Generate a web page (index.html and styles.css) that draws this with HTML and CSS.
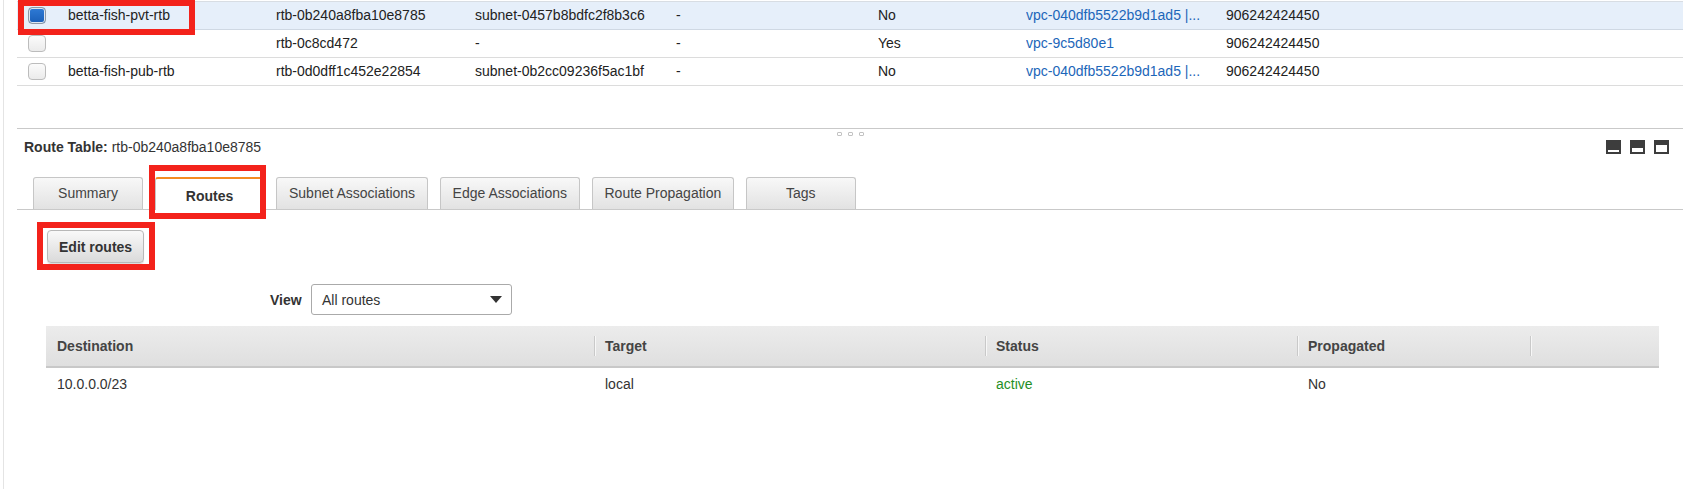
FILE: index.html
```html
<!DOCTYPE html>
<html>
<head>
<meta charset="utf-8">
<link rel="stylesheet" href="styles.css">
</head>
<body>
<div class="page">
  <div class="list">
    <div class="row selected">
      <div class="cell cb"><span class="check on"></span></div>
      <div class="cell">betta-fish-pvt-rtb</div>
      <div class="cell">rtb-0b240a8fba10e8785</div>
      <div class="cell">subnet-0457b8bdfc2f8b3c6</div>
      <div class="cell">-</div>
      <div class="cell">No</div>
      <div class="cell link">vpc-040dfb5522b9d1ad5 |...</div>
      <div class="cell">906242424450</div>
    </div>
    <div class="row">
      <div class="cell cb"><span class="check"></span></div>
      <div class="cell"></div>
      <div class="cell">rtb-0c8cd472</div>
      <div class="cell">-</div>
      <div class="cell">-</div>
      <div class="cell">Yes</div>
      <div class="cell link">vpc-9c5d80e1</div>
      <div class="cell">906242424450</div>
    </div>
    <div class="row">
      <div class="cell cb"><span class="check"></span></div>
      <div class="cell">betta-fish-pub-rtb</div>
      <div class="cell">rtb-0d0dff1c452e22854</div>
      <div class="cell">subnet-0b2cc09236f5ac1bf</div>
      <div class="cell">-</div>
      <div class="cell">No</div>
      <div class="cell link">vpc-040dfb5522b9d1ad5 |...</div>
      <div class="cell">906242424450</div>
    </div>
  </div>

  <div class="splitter"><span class="grip"><i></i><i></i><i></i></span></div>

  <div class="detail-head">
    <div class="title"><b>Route Table:</b> rtb-0b240a8fba10e8785</div>
    <div class="layout-icons">
      <svg width="15" height="14" viewBox="0 0 15 14"><rect width="15" height="14" fill="#3d3d3d"/><rect x="2" y="10" width="11" height="2" fill="#fff"/></svg>
      <svg width="15" height="14" viewBox="0 0 15 14"><rect width="15" height="14" fill="#3d3d3d"/><rect x="2" y="8" width="11" height="4" fill="#fff"/></svg>
      <svg width="15" height="14" viewBox="0 0 15 14"><rect width="15" height="14" fill="#3d3d3d"/><rect x="2" y="5" width="11" height="7" fill="#fff"/></svg>
    </div>
  </div>

  <div class="tabs">
    <div class="tab">Summary</div>
    <div class="tab active">Routes</div>
    <div class="tab">Subnet Associations</div>
    <div class="tab">Edge Associations</div>
    <div class="tab">Route Propagation</div>
    <div class="tab">Tags</div>
  </div>

  <div class="panel">
    <button class="btn">Edit routes</button>
    <div class="view-row">
      <span class="view-label">View</span>
      <div class="select">
        <span>All routes</span>
        <svg width="12" height="7" viewBox="0 0 12 7"><path d="M0 0 L12 0 L6 7 Z" fill="#333"/></svg>
      </div>
    </div>
    <div class="routes">
      <div class="rhead">
        <div class="rc">Destination</div>
        <div class="rc sep">Target</div>
        <div class="rc sep">Status</div>
        <div class="rc sep">Propagated</div>
        <div class="rc sep"></div>
      </div>
      <div class="rrow">
        <div class="rc">10.0.0.0/23</div>
        <div class="rc">local</div>
        <div class="rc ok">active</div>
        <div class="rc">No</div>
        <div class="rc"></div>
      </div>
    </div>
  </div>

  <div class="annot a1"></div>
  <div class="annot a2"></div>
  <div class="annot a3"></div>
</div>
</body>
</html>
```

FILE: styles.css
```css
html, body {
  margin: 0;
  padding: 0;
  background: #fff;
}
body {
  font-family: "Liberation Sans", Arial, Helvetica, sans-serif;
  font-size: 14px;
  color: #222;
}
.page {
  position: relative;
  margin-left: 3px;
  border-left: 1px solid #e4e4e4;
  height: 489px;
  box-sizing: border-box;
  overflow: hidden;
}

/* top list */
.list {
  margin: 1px 10px 0 13px;
  border-top: 1px solid #d8dde3;
}
.row {
  display: grid;
  grid-template-columns: 51px 208px 199px 201px 202px 148px 200px 1fr;
  height: 27px;
  border-bottom: 1px solid #dcdcdc;
  align-items: center;
}
.row.selected {
  background: #e6effa;
  border-bottom-color: #cfd8e3;
}
.cell {
  white-space: nowrap;
  overflow: hidden;
  line-height: 27px;
}
.cell.cb {
  padding-left: 11px;
  display: flex;
  align-items: center;
}
.link { color: #1c66b9; }
.check {
  display: inline-block;
  width: 18px;
  height: 17px;
  box-sizing: border-box;
  border: 1px solid #bcbcbc;
  border-radius: 4px;
  background: linear-gradient(#fbfbfb, #ebebeb);
}
.check.on {
  border-color: #8d98a6;
  background: linear-gradient(#2f7bd6, #1a5fb8);
  box-shadow: inset 0 0 0 1px #dfe7f1;
}

/* splitter */
.splitter {
  margin: 42px 10px 0 13px;
  border-top: 1px solid #c9c9c9;
  height: 8px;
  display: flex;
  justify-content: center;
}
.grip {
  display: flex;
  gap: 6px;
  margin-top: 3px;
  height: 3px;
}
.grip i {
  display: block;
  width: 3px;
  height: 2px;
  border: 1px solid #c2c2c2;
  border-radius: 1px;
}

/* detail head */
.detail-head {
  display: flex;
  justify-content: space-between;
  align-items: center;
  margin: 0 24px 0 20px;
  padding-top: 3px;
  height: 14px;
}
.title {
  color: #333;
  font-size: 14px;
}
.title b { color: #333; }
.layout-icons {
  display: flex;
  gap: 9px;
}
.layout-icons svg { display: block; }

/* tabs */
.tabs {
  display: flex;
  gap: 11.5px;
  margin: 23px 10px 0 13px;
  padding-left: 16px;
  border-bottom: 1px solid #c9c9c9;
  height: 32px;
}
.tab {
  box-sizing: border-box;
  min-width: 110px;
  height: 32px;
  padding: 0 12px;
  border: 1px solid #c6c6c6;
  border-bottom: none;
  border-radius: 3px 3px 0 0;
  background: linear-gradient(#f8f8f8, #e2e2e2);
  color: #444;
  font-size: 14px;
  display: flex;
  align-items: center;
  justify-content: center;
  white-space: nowrap;
  padding-bottom: 2px;
}
.tab.active {
  background: #fff;
  border-top: 2px solid #f48b21;
  border-color: #f48b21 #c6c6c6 #fff;
  height: 33px;
  font-weight: bold;
  color: #333;
  padding-top: 2px;
  padding-bottom: 0;
}

/* panel */
.panel {
  padding-left: 43px;
}
.btn {
  display: block;
  margin-top: 20px;
  height: 33px;
  padding: 0 11px;
  font-family: inherit;
  font-size: 14px;
  font-weight: bold;
  color: #333;
  border: 1px solid #b8b8b8;
  border-radius: 4px;
  background: linear-gradient(#f9f9f9, #dadada);
  box-shadow: 0 1px 1px rgba(0,0,0,0.15);
}
.view-row {
  display: flex;
  align-items: center;
  margin: 21px 0 0 223px;
  height: 31px;
}
.view-label {
  font-weight: bold;
  color: #333;
  width: 32px;
  margin-right: 9px;
}
.select {
  box-sizing: border-box;
  width: 201px;
  height: 31px;
  border: 1px solid #aaa;
  border-radius: 3px;
  display: flex;
  align-items: center;
  justify-content: space-between;
  padding: 0 9px 0 10px;
  color: #333;
  background: #fff;
}
.select svg { display: block; }

/* routes table */
.routes {
  margin: 11px 0 0 -1px;
  width: 1613px;
}
.rhead, .rrow {
  display: grid;
  grid-template-columns: 548px 391px 312px 233px 129px;
}
.rhead {
  height: 40px;
  background: linear-gradient(#ececec, #dfdfdf);
  border-bottom: 2px solid #c8c8c8;
  font-weight: bold;
  color: #444;
}
.rrow {
  height: 32px;
  color: #333;
}
.rc {
  position: relative;
  display: flex;
  align-items: center;
  padding-left: 11px;
  white-space: nowrap;
}
.rc.sep::before {
  content: "";
  position: absolute;
  left: 0;
  top: 10px;
  height: 20px;
  width: 1px;
  background: #c9c9c9;
  box-shadow: 1px 0 0 #f7f7f7;
}
.ok { color: #1f8f27; }

/* annotations */
.annot {
  position: absolute;
  box-sizing: border-box;
  border: 6px solid #f3221b;
}
.a1 { left: 14px; top: 0; width: 177px; height: 35px; }
.a2 { left: 145px; top: 165px; width: 117px; height: 54px; }
.a3 { left: 33px; top: 222px; width: 118px; height: 48px; }
```
